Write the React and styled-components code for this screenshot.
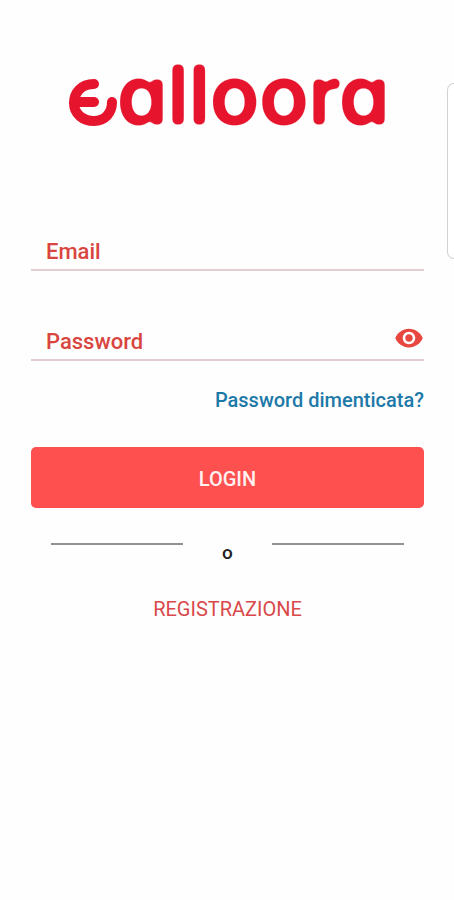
import React, { useState } from "react";
import styled, { createGlobalStyle } from "styled-components";

const GlobalStyle = createGlobalStyle`
  *, *::before, *::after { box-sizing: border-box; }
  body {
    margin: 0;
    background: #fefefe;
    font-family: Roboto, "Liberation Sans", sans-serif;
  }
  button, input { font: inherit; }
`;

const Page = styled.main`
  position: relative;
  min-height: 100vh;
  padding: 42px 30px 32px 31px;
  overflow: hidden;
`;

const Logo = styled.svg`
  display: block;
  width: 340px;
  max-width: 100%;
  height: auto;
  margin: 0 auto;
`;

const Wordmark = styled.text`
  font-family: Inter, sans-serif;
  font-size: 81px;
  font-weight: 600;
  font-feature-settings: "cv11";
  fill: #e6142d;
`;

const Form = styled.form`
  display: flex;
  flex-direction: column;
  margin-top: 76px;
`;

const Field = styled.div`
  display: flex;
  align-items: center;
  height: 47px;
  padding: 9px 0 0 15px;
  border-bottom: 2px solid #e3cdd1;
  color: #d9453f;
  font-size: 22px;
  font-weight: 500;

  & + & { margin-top: 43px; }
`;

const Input = styled.input`
  flex: 1;
  min-width: 0;
  padding: 0 8px;
  border: 0;
  outline: 0;
  background: transparent;
  color: inherit;
`;

const EyeButton = styled.button`
  display: flex;
  padding: 0;
  margin-bottom: 7px;
  border: 0;
  background: none;
  color: #e8473f;
  cursor: pointer;
`;

const ForgotLink = styled.a`
  align-self: flex-end;
  margin-top: 27px;
  color: #1c79a8;
  font-size: 20px;
  font-weight: 500;
  line-height: 24px;
  text-decoration: none;
`;

const LoginButton = styled.button`
  height: 61px;
  margin-top: 35px;
  padding: 2px 0 0;
  border: 0;
  border-radius: 5px;
  background: #ff5050;
  color: #fff0f0;
  font-size: 20px;
  font-weight: 500;
  cursor: pointer;
`;

const Divider = styled.div`
  display: flex;
  justify-content: space-between;
  margin-top: 35px;
  padding: 0 20px;
  color: #222;
  font-size: 19px;
  line-height: 20px;
`;

const Rule = styled.span`
  flex: 0 1 132px;
  height: 2px;
  background: #929292;
`;

const RegisterLink = styled.a`
  align-self: center;
  margin-top: 34px;
  color: #d9484a;
  font-size: 20px;
  line-height: 24px;
  text-decoration: none;
`;

const EdgePanel = styled.div`
  position: absolute;
  top: 83px;
  right: 0;
  width: 7px;
  height: 176px;
  border: 1px solid #d2d2d2;
  border-right: 0;
  border-radius: 7px 0 0 7px;
  background: #fff;
`;

const Or = styled.span`
  font-weight: 500;
`;

function BrandLogo() {
  return (
    <Logo viewBox="-10 -20 340 106" role="img" aria-label="ealloora">
      <defs>
        <filter id="rounded" x="-5%" y="-5%" width="110%" height="110%" colorInterpolationFilters="sRGB">
          <feGaussianBlur stdDeviation="2.6" result="soft" />
          <feComponentTransfer in="soft" result="shape">
            <feFuncA type="linear" slope="6" intercept="-2" />
          </feComponentTransfer>
          <feFlood floodColor="#e6142d" />
          <feComposite in2="shape" operator="in" />
        </filter>
      </defs>
      <g fill="none" stroke="#e6142d" strokeWidth="10" strokeLinecap="round">
        <path d="M26 22 C13 22 6 31 6 41 C6 52 15 59 26 59 C37 59 44 51 44 40" />
        <path d="M11 40 H26" />
      </g>
      <Wordmark x="49" y="62" filter="url(#rounded)">alloora</Wordmark>
    </Logo>
  );
}

function EyeIcon() {
  return (
    <svg width="30" height="30" viewBox="0 0 24 24" fill="currentColor" aria-hidden="true">
      <path d="M12 4.5C7 4.5 2.73 7.61 1 12c1.73 4.39 6 7.5 11 7.5s9.27-3.11 11-7.5c-1.73-4.39-6-7.5-11-7.5zM12 17c-2.76 0-5-2.24-5-5s2.24-5 5-5 5 2.24 5 5-2.24 5-5 5zm0-8c-1.66 0-3 1.34-3 3s1.34 3 3 3 3-1.34 3-3-1.34-3-3-3z" />
    </svg>
  );
}

export default function App() {
  const [visible, setVisible] = useState(false);
  return (
    <>
      <GlobalStyle />
      <Page>
        <BrandLogo />
        <Form onSubmit={(event) => event.preventDefault()}>
          <Field>
            <label htmlFor="email">Email</label>
            <Input id="email" type="email" autoComplete="email" />
          </Field>
          <Field>
            <label htmlFor="password">Password</label>
            <Input
              id="password"
              type={visible ? "text" : "password"}
              autoComplete="current-password"
            />
            <EyeButton
              type="button"
              aria-label="Mostra password"
              aria-pressed={visible}
              onClick={() => setVisible(!visible)}
            >
              <EyeIcon />
            </EyeButton>
          </Field>
          <ForgotLink href="#recupero">Password dimenticata?</ForgotLink>
          <LoginButton type="submit">LOGIN</LoginButton>
          <Divider>
            <Rule />
            <Or>o</Or>
            <Rule />
          </Divider>
          <RegisterLink href="#registrazione">REGISTRAZIONE</RegisterLink>
        </Form>
        <EdgePanel />
      </Page>
    </>
  );
}
